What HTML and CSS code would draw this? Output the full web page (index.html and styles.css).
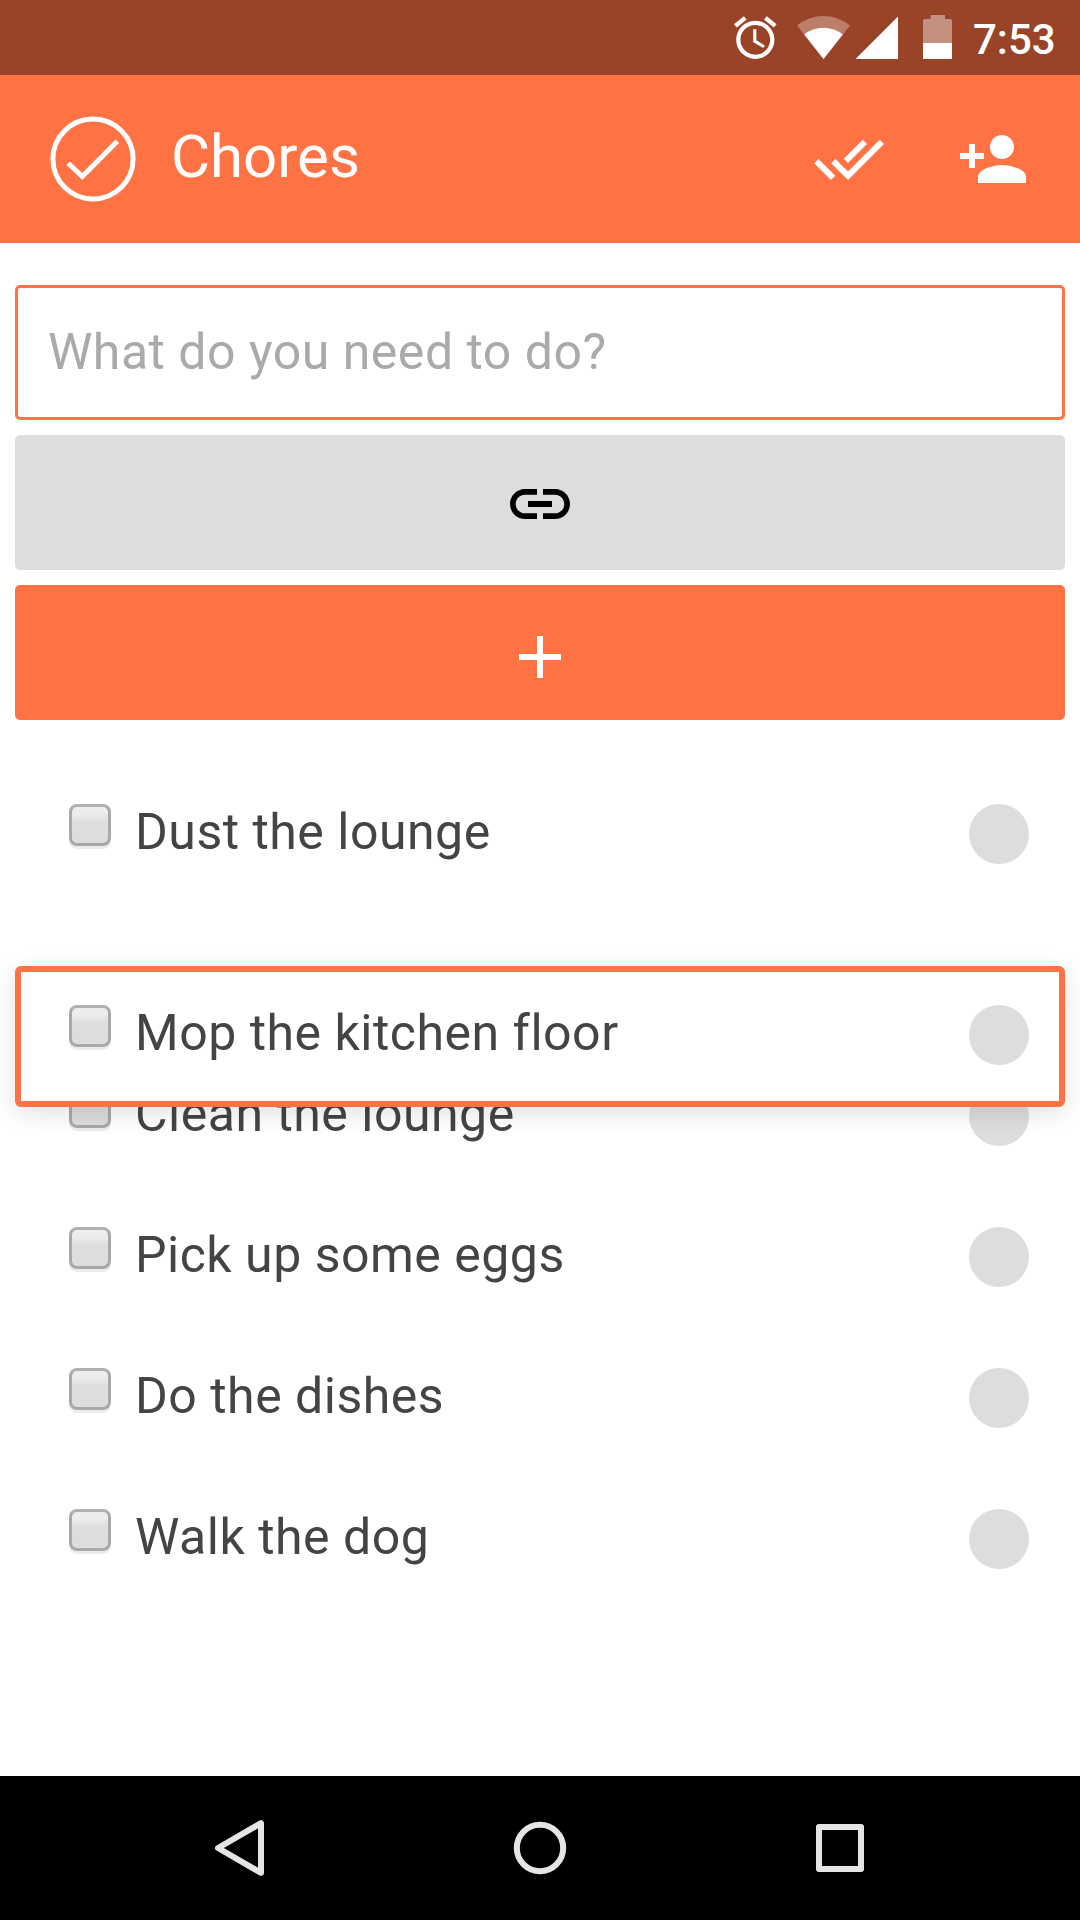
FILE: index.html
```html
<!DOCTYPE html>
<html lang="en">
<head>
<meta charset="utf-8">
<title>Chores</title>
<link rel="stylesheet" href="styles.css">
</head>
<body>
<div class="status">
  <svg class="status-icons" viewBox="0 0 240 75" aria-hidden="true">
    <path fill="#fff" transform="translate(9.8 12.2) scale(2.125)" d="M22 5.72l-4.6-3.86-1.29 1.53 4.6 3.86L22 5.72zM7.88 3.39L6.6 1.86 2 5.71l1.29 1.53 4.59-3.85zM12.5 8H11v6l4.75 2.85.75-1.23-4-2.37V8zM12 4c-4.97 0-9 4.03-9 9s4.02 9 9 9c4.97 0 9-4.03 9-9s-4.03-9-9-9zm0 16c-3.87 0-7-3.13-7-7s3.13-7 7-7 7 3.13 7 7-3.13 7-7 7z"/>
    <path fill="#bb7e69" d="M103.5 59L77 25.6a41.4 41.4 0 0 1 53 0z"/>
    <path fill="#fff" d="M103.5 59L84.2 34.5a30.8 30.8 0 0 1 38.6 0z"/>
    <path fill="#fff" d="M135.5 59H178V16.5z"/>
    <path fill="#c49080" d="M203 43V20l1.500-1H210.500V15H225V19h5.500l1.500 1V43z"/>
    <path fill="#fff" d="M203 43h29v16h-29z"/>
  </svg>
  <span class="clock">7:53</span>
</div>
<header class="appbar">
  <svg class="logo" viewBox="0 0 86 86" aria-hidden="true"><circle cx="43" cy="43" r="40.100"/><path d="M18.300 47.300L32.300 60.500L67.300 25.300"/></svg>
  <h1 class="title">Chores</h1>
  <svg class="icon" viewBox="0 0 24 24" aria-hidden="true"><path d="M18 7l-1.410-1.410-6.340 6.340 1.410 1.410L18 7zm4.240-1.410L11.660 16.170 7.480 12l-1.410 1.410L11.660 19l12-12-1.420-1.410zM.41 13.410L6 19l1.410-1.410L1.830 12 .41 13.410z"/></svg>
  <svg class="icon" viewBox="0 0 24 24" aria-hidden="true"><path d="M15 12c2.210 0 4-1.790 4-4s-1.790-4-4-4-4 1.790-4 4 1.790 4 4 4zm-9-2V7H4v3H1v2h3v3h2v-3h3v-2H6zm9 4c-2.670 0-8 1.340-8 4v2h16v-2c0-2.660-5.330-4-8-4z"/></svg>
</header>
<main class="main">
  <div class="form">
    <input class="field" type="text" placeholder="What do you need to do?">
    <button class="btn link" type="button" aria-label="Add link"><svg class="icon" viewBox="0 0 24 24"><path d="M3.900 12c0-1.710 1.390-3.100 3.100-3.100h4V7H7c-2.760 0-5 2.240-5 5s2.240 5 5 5h4v-1.900H7c-1.710 0-3.100-1.390-3.100-3.100zM8 13h8v-2H8v2zm9-6h-4v1.900h4c1.710 0 3.100 1.390 3.100 3.100s-1.390 3.100-3.100 3.100h-4V17h4c2.760 0 5-2.240 5-5s-2.240-5-5-5z"/></svg></button>
    <button class="btn add" type="button" aria-label="Add chore"><svg class="icon" viewBox="0 0 24 24"><path d="M19 13h-6v6h-2v-6H5v-2h6V5h2v6h6v2z"/></svg></button>
  </div>
  <ul class="list">
    <li class="item"><span class="box"></span><span class="label">Dust the lounge</span><span class="dot"></span></li>
    <li class="item dragging"><span class="box"></span><span class="label">Mop the kitchen floor</span><span class="dot"></span></li>
    <li class="item"><span class="box"></span><span class="label">Clean the lounge</span><span class="dot"></span></li>
    <li class="item"><span class="box"></span><span class="label">Pick up some eggs</span><span class="dot"></span></li>
    <li class="item"><span class="box"></span><span class="label">Do the dishes</span><span class="dot"></span></li>
    <li class="item"><span class="box"></span><span class="label">Walk the dog</span><span class="dot"></span></li>
  </ul>
</main>
<nav class="navbar">
  <svg class="nav-icon" viewBox="0 0 60 60" aria-hidden="true"><path d="M8 30L51 5.200V54.800z"/></svg>
  <svg class="nav-icon" viewBox="0 0 60 60" aria-hidden="true"><circle cx="30" cy="30" r="23.200"/></svg>
  <svg class="nav-icon" viewBox="0 0 60 60" aria-hidden="true"><rect x="9" y="9" width="42" height="42"/></svg>
</nav>
</body>
</html>
```
FILE: styles.css
```css
* { box-sizing: border-box; }

body {
  margin: 0;
  height: 1920px;
  display: flex;
  flex-direction: column;
  overflow: hidden;
  background: #fff;
  color: #444;
  font-family: Roboto, sans-serif;
}

svg { display: block; flex: none; }

.status {
  height: 75px;
  display: flex;
  justify-content: flex-end;
  background: #994428;
  color: #fff;
}

.status-icons { width: 240px; height: 75px; }

.clock {
  width: 120px;
  padding: 15px 0 0 13px;
  font-size: 42px;
  line-height: 49px;
  font-weight: 500;
}

.appbar {
  height: 168px;
  display: flex;
  align-items: center;
  gap: 72px;
  padding: 0 51px 0 50px;
  background: #ff7243;
  color: #fff;
}

.logo {
  width: 86px;
  height: 86px;
  margin-right: -37px;
  fill: none;
  stroke: #fff;
  stroke-width: 5;
}

.title {
  flex: 1;
  margin: 0;
  padding-bottom: 4px;
  font-size: 60px;
  line-height: 70px;
  font-weight: 400;
}

.icon { width: 72px; height: 72px; fill: currentColor; }

.main { flex: 1; }

.form {
  display: flex;
  flex-direction: column;
  gap: 15px;
  padding: 42px 15px 0;
}

.field,
.btn {
  width: 100%;
  height: 135px;
  border-radius: 5px;
}

.field {
  padding: 0 30px 1px;
  border: 3px solid #ff7243;
  background: #fff;
  font: 400 50px/60px Roboto, sans-serif;
  letter-spacing: .5px;
  outline: none;
}

.field::placeholder { color: #aaa; opacity: 1; }

.btn {
  display: flex;
  justify-content: center;
  align-items: flex-start;
  border: 0;
  padding: 33px 0 0;
}

.link { background: #ddd; color: #000; }
.add { background: #ff7243; color: #fff; padding-top: 36px; }

.list {
  margin: 45px 0 0;
  padding: 0 15px;
  list-style: none;
}

.item {
  height: 141px;
  display: flex;
  align-items: flex-start;
  padding: 33px 30px 0 48px;
  border: 6px solid transparent;
  border-radius: 6px;
}

/* The lifted row floats over its neighbours while it is being moved. */
.dragging {
  position: relative;
  top: 60px;
  z-index: 1;
  background: #fff;
  border-color: #ff7243;
  box-shadow: 0 6px 24px rgba(0, 0, 0, .12);
}

.box {
  width: 42px;
  height: 42px;
  border: 3px solid #a8a8a8;
  border-top-color: #b0b0b0;
  border-radius: 8px;
  background: linear-gradient(#eee, #ececec 20%, #ddd 42%, #ddd);
  box-shadow: 0 3px 0 #ececec;
}

.label {
  flex: 1;
  margin: -2px 0 0 24px;
  font-size: 50px;
  line-height: 60px;
  letter-spacing: .5px;
  white-space: nowrap;
}

.dot {
  width: 60px;
  height: 60px;
  border-radius: 50%;
  background: #ddd;
}

.navbar {
  height: 144px;
  display: flex;
  justify-content: center;
  align-items: center;
  gap: 240px;
  background: #000;
}

.nav-icon {
  width: 60px;
  height: 60px;
  fill: none;
  stroke: #e5e5e5;
  stroke-width: 6;
  stroke-linejoin: round;
}
```
